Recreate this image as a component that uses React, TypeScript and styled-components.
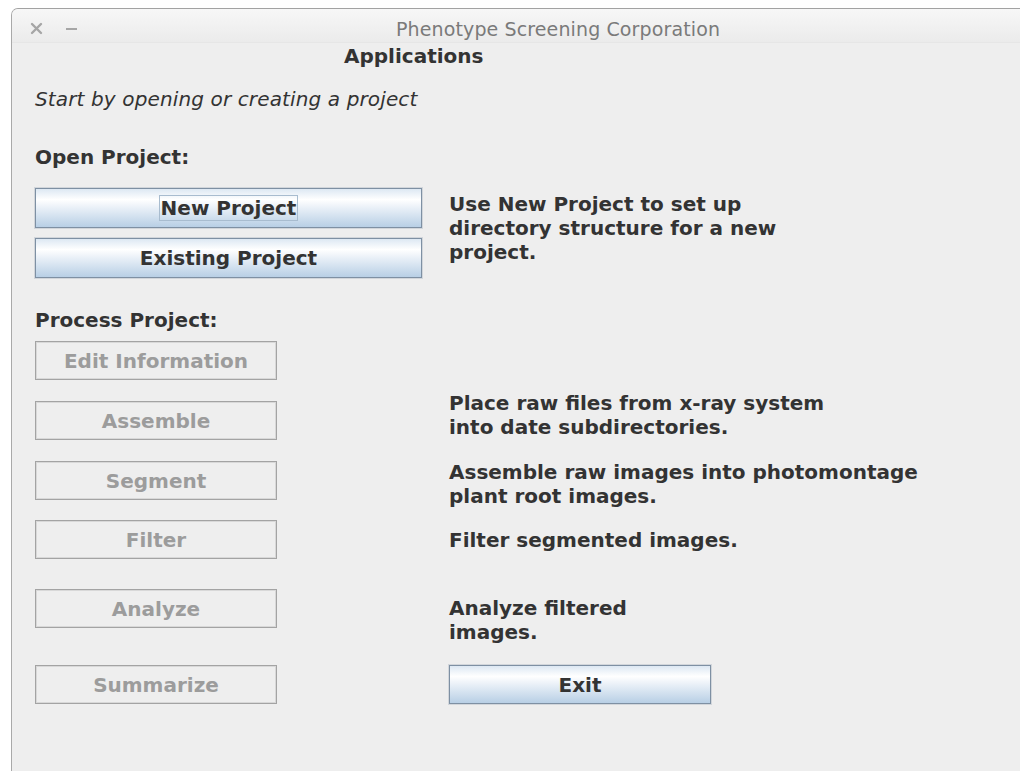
import React from 'react';
import styled, { createGlobalStyle, css } from 'styled-components';

const GlobalStyle = createGlobalStyle`
  html, body {
    margin: 0;
    padding: 0;
    background: #ffffff;
    overflow: hidden;
  }
`;

const Window = styled.div`
  margin: 8px 0 0 11px;
  height: 763px;
  background: #eeeeee;
  border-left: 1px solid #a9a9a9;
  border-top: 1px solid #a2a2a2;
  border-top-left-radius: 7px;
  overflow: hidden;
  font-family: "DejaVu Sans", "Liberation Sans", sans-serif;
  color: #333333;
`;

const TitleBar = styled.div`
  box-sizing: border-box;
  height: 34px;
  display: flex;
  align-items: center;
  padding: 6px 0 0 18px;
  background: linear-gradient(#f7f7f7, #ebebeb);
  border-bottom: 1px solid #e6e6e6;
`;

const TitleControls = styled.div`
  display: flex;
  align-items: center;
  gap: 22px;
  width: 366px;
`;

const TitleText = styled.div`
  font-size: 19px;
  letter-spacing: 0.12px;
  color: #7a7a7a;
  white-space: nowrap;
`;

const Content = styled.div`
  padding-left: 23px;
  font-size: 20px;
  line-height: 24px;
`;

const Heading = styled.div`
  margin: 1px 0 0 309px;
  font-weight: bold;
`;

const Intro = styled.div`
  margin-top: 19px;
  font-style: italic;
  letter-spacing: 0.13px;
`;

const SectionLabel = styled.div<{ $top: number }>`
  margin-top: ${p => p.$top}px;
  font-weight: bold;
`;

const Row = styled.div<{ $top: number }>`
  display: grid;
  grid-template-columns: 387px 1fr;
  column-gap: 27px;
  align-items: start;
  margin-top: ${p => p.$top}px;
`;

const ButtonStack = styled.div`
  display: flex;
  flex-direction: column;
  gap: 10px;
`;

const Description = styled.div<{ $top?: number }>`
  margin-top: ${p => p.$top ?? 0}px;
  font-weight: bold;
  white-space: nowrap;
`;

const Button = styled.button<{ $width: number; $height?: number; $top?: number }>`
  box-sizing: border-box;
  width: ${p => p.$width}px;
  height: ${p => p.$height ?? 39}px;
  margin-top: ${p => p.$top ?? 0}px;
  padding: 0;
  display: flex;
  align-items: center;
  justify-content: center;
  font-family: inherit;
  font-size: 20px;
  font-weight: bold;
  cursor: default;
  ${p =>
    p.disabled
      ? css`
          color: #9c9c9c;
          background: #eeeeee;
          border: 1px solid #a3a3a3;
          box-shadow: inset 0 0 0 1px #d8d8d8;
        `
      : css`
          color: #333333;
          background: linear-gradient(#dde8f3 0%, #ffffff 28%, #eef3f9 45%, #dde8f3 62%, #b8cfe5 100%);
          border: 1px solid #7e90a3;
          box-shadow: 0 0 0 1px rgba(126, 144, 163, 0.25);
        `}
`;

const FocusRing = styled.span`
  border: 1px solid #a8bccf;
  padding: 0 1px;
  line-height: 24px;
`;

const CloseIcon = () => (
  <svg width="13" height="13" viewBox="0 0 13 13">
    <path d="M2 2 L11 11 M11 2 L2 11" stroke="#a6a6a6" strokeWidth="2.4" strokeLinecap="round" />
  </svg>
);

const MinimizeIcon = () => (
  <svg width="13" height="13" viewBox="0 0 13 13">
    <path d="M1 7 H12" stroke="#a6a6a6" strokeWidth="2" />
  </svg>
);

const App: React.FC = () => {
  return (
    <>
      <GlobalStyle />
      <Window>
        <TitleBar>
          <TitleControls>
            <CloseIcon />
            <MinimizeIcon />
          </TitleControls>
          <TitleText>Phenotype Screening Corporation</TitleText>
        </TitleBar>
        <Content>
          <Heading>Applications</Heading>
          <Intro>Start by opening or creating a project</Intro>

          <SectionLabel $top={34}>Open Project:</SectionLabel>
          <Row $top={19}>
            <ButtonStack>
              <Button $width={387} $height={40}>
                <FocusRing>New Project</FocusRing>
              </Button>
              <Button $width={387} $height={40}>Existing Project</Button>
            </ButtonStack>
            <Description $top={4}>
              Use New Project to set up
              <br />
              directory structure for a new
              <br />
              project.
            </Description>
          </Row>

          <SectionLabel $top={30}>Process Project:</SectionLabel>
          <Row $top={9}>
            <Button $width={242} disabled>Edit Information</Button>
          </Row>
          <Row $top={11}>
            <Button $width={242} $top={10} disabled>Assemble</Button>
            <Description>
              Place raw files from x-ray system
              <br />
              into date subdirectories.
            </Description>
          </Row>
          <Row $top={20}>
            <Button $width={242} $top={1} disabled>Segment</Button>
            <Description>
              Assemble raw images into photomontage
              <br />
              plant root images.
            </Description>
          </Row>
          <Row $top={12}>
            <Button $width={242} disabled>Filter</Button>
            <Description $top={8}>Filter segmented images.</Description>
          </Row>
          <Row $top={30}>
            <Button $width={242} disabled>Analyze</Button>
            <Description $top={7}>
              Analyze filtered
              <br />
              images.
            </Description>
          </Row>
          <Row $top={21}>
            <Button $width={242} disabled>Summarize</Button>
            <Button $width={262}>Exit</Button>
          </Row>
        </Content>
      </Window>
    </>
  );
};

export default App;
